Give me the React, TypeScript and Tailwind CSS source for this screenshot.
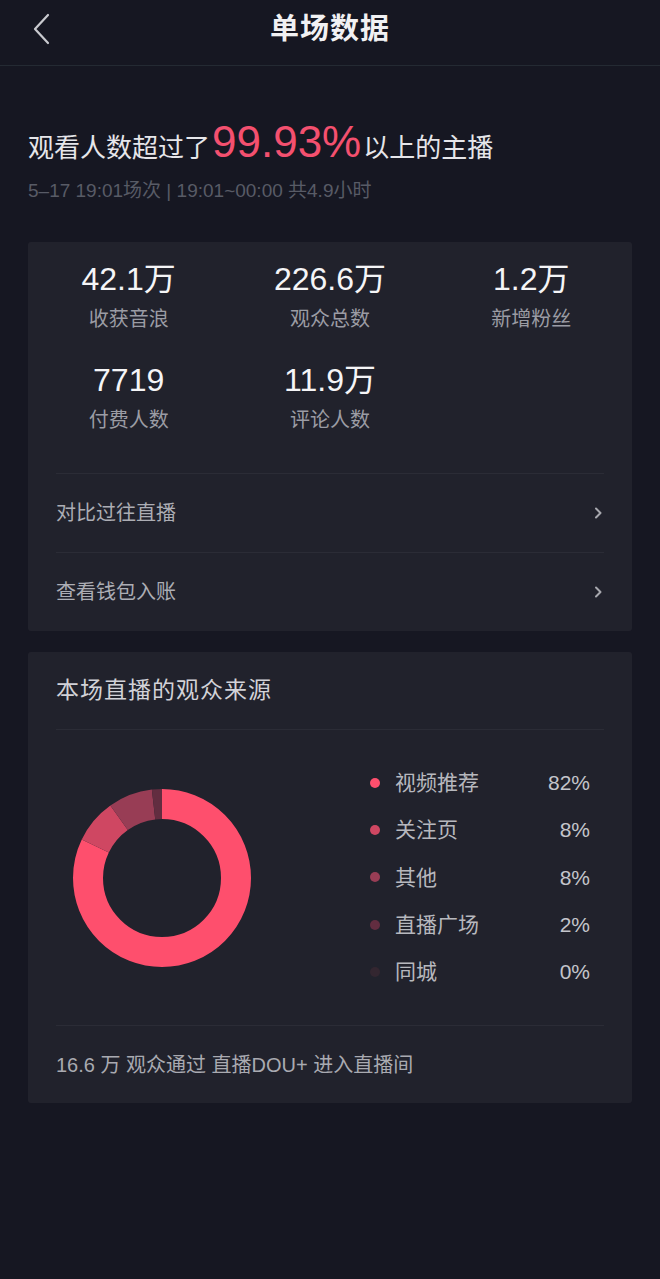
const FONT = "font-['Liberation_Sans','Noto_Sans_CJK_SC',sans-serif]"

// ─── Data ─────────────────────────────────────────────────────────────────────

const stats = [
  { value: '42.1万', label: '收获音浪' },
  { value: '226.6万', label: '观众总数' },
  { value: '1.2万', label: '新增粉丝' },
  { value: '7719', label: '付费人数' },
  { value: '11.9万', label: '评论人数' },
]

const sources = [
  { label: '视频推荐', pct: 82, color: '#fe4f6d' },
  { label: '关注页', pct: 8, color: '#cf4762' },
  { label: '其他', pct: 8, color: '#983d55' },
  { label: '直播广场', pct: 2, color: '#622d40' },
  { label: '同城', pct: 0, color: '#332630' },
]

// ─── Pieces ──────────────────────────────────────────────────────────────────

function Chevron() {
  return (
    <svg width="12" height="16" viewBox="0 0 12 16" fill="none">
      <path d="M4 3.5 L8.5 8 L4 12.5" stroke="#a7a8ae" strokeWidth="2" strokeLinecap="round" strokeLinejoin="round" />
    </svg>
  )
}

function Donut() {
  const r = 74
  const c = 2 * Math.PI * r
  let offset = 0
  return (
    <svg width="178" height="178" viewBox="0 0 178 178">
      <g transform="rotate(-90 89 89)">
        {sources.map((s) => {
          const len = (s.pct / 100) * c
          const el = (
            <circle
              key={s.label}
              cx="89"
              cy="89"
              r={r}
              fill="none"
              stroke={s.color}
              strokeWidth="30"
              strokeDasharray={`${len} ${c - len}`}
              strokeDashoffset={-offset}
            />
          )
          offset += len
          return el
        })}
      </g>
    </svg>
  )
}

function Divider() {
  return <div className="mx-[28px] h-px bg-[#2b2c36]" />
}

// ─── Main ─────────────────────────────────────────────────────────────────────

export default function App() {
  return (
    <div className={`${FONT} min-h-[1279px] w-[660px] bg-[#161722] text-white`}>
      {/* Header */}
      <div className="relative flex h-[66px] items-center justify-center border-b border-[#242a33] pb-[5px]">
        <svg className="absolute left-[30px] top-[12px]" width="22" height="34" viewBox="0 0 22 34" fill="none">
          <path d="M18 3 L5 17 L18 31" stroke="#c9cacf" strokeWidth="2.2" strokeLinecap="round" strokeLinejoin="round" />
        </svg>
        <h1 className="text-[29px] font-bold tracking-[1px] text-[#f1f1f3]">单场数据</h1>
      </div>

      {/* Headline */}
      <div className="mt-[50px] px-[28px]">
        <p className="h-[52px] whitespace-nowrap text-[26px] leading-[52px] text-[#e6e6ea]">
          观看人数超过了
          <span className="mx-[2px] text-[44px] font-medium text-[#f4506f]">99.93%</span>
          以上的主播
        </p>
        <p className="mt-[9px] text-[19px] leading-[28px] text-[#585b66]">
          5–17 19:01场次 | 19:01~00:00 共4.9小时
        </p>
      </div>

      {/* Stats card */}
      <div className="mx-[28px] mt-[37px] rounded-[3px] bg-[#21222c]">
        <div className="grid grid-cols-3 gap-y-[27px] pt-[17px]">
          {stats.map((s) => (
            <div key={s.label} className="flex flex-col items-center">
              <span className="text-[32px] leading-[40px] text-[#f5f5f7]">{s.value}</span>
              <span className="mt-[6px] text-[20px] leading-[28px] text-[#9b9ca4]">{s.label}</span>
            </div>
          ))}
        </div>
        <div className="mt-[39px]">
          <Divider />
        </div>
        <div className="flex h-[78px] items-center justify-between px-[28px]">
          <span className="text-[20px] text-[#acadb4]">对比过往直播</span>
          <Chevron />
        </div>
        <Divider />
        <div className="flex h-[78px] items-center justify-between px-[28px]">
          <span className="text-[20px] text-[#acadb4]">查看钱包入账</span>
          <Chevron />
        </div>
      </div>

      {/* Audience source card */}
      <div className="mx-[28px] mt-[21px] rounded-[3px] bg-[#21222c]">
        <div className="flex h-[77px] items-center px-[28px]">
          <h2 className="text-[23px] tracking-[1px] text-[#d2d2d8]">本场直播的观众来源</h2>
        </div>
        <Divider />
        <div className="flex h-[295px] items-center pl-[45px] pr-[42px]">
          <Donut />
          <ul className="ml-auto w-[220px]">
            {sources.map((s) => (
              <li key={s.label} className="flex h-[47.3px] items-center">
                <span className="h-[10px] w-[10px] rounded-full" style={{ background: s.color }} />
                <span className="ml-[15px] text-[21px] text-[#b7b8be]">{s.label}</span>
                <span className="ml-auto text-[21px] text-[#c4c5cb]">{s.pct}%</span>
              </li>
            ))}
          </ul>
        </div>
        <Divider />
        <div className="flex h-[77px] items-center px-[28px]">
          <span className="text-[20px] text-[#a9aab1]">16.6 万 观众通过 直播DOU+ 进入直播间</span>
        </div>
      </div>
    </div>
  )
}
